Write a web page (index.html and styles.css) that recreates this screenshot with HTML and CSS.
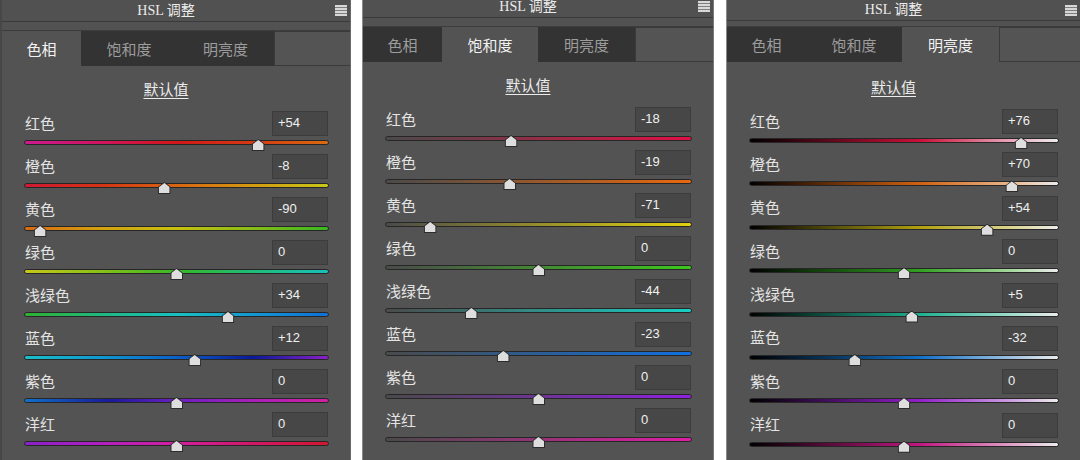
FILE: index.html
```html
<!DOCTYPE html>
<html lang="zh-CN">
<head>
<meta charset="utf-8">
<title>HSL 调整</title>
<link rel="stylesheet" href="styles.css">
</head>
<body>
<div class="page">
  <section class="panel p1">
    <header class="titlebar"><span class="title">HSL 调整</span><span class="menu-wrap"><span class="menu"></span></span></header>
    <div class="band"></div>
    <nav class="tabs">
      <div class="tab t1 active">色相</div><div class="tab t2">饱和度</div><div class="tab t3">明亮度</div><div class="tab-fill"></div>
    </nav>
    <div class="defaults"><span class="defaults-link">默认值</span></div>
    <div class="rows">
      <div class="row"><div class="row-head"><span class="label">红色</span><span class="value">+54</span></div><div class="track h-red"><span class="thumb" style="left:77%"></span></div></div>
      <div class="row"><div class="row-head"><span class="label">橙色</span><span class="value">-8</span></div><div class="track h-orange"><span class="thumb" style="left:46%"></span></div></div>
      <div class="row"><div class="row-head"><span class="label">黄色</span><span class="value">-90</span></div><div class="track h-yellow"><span class="thumb" style="left:5%"></span></div></div>
      <div class="row"><div class="row-head"><span class="label">绿色</span><span class="value">0</span></div><div class="track h-green"><span class="thumb" style="left:50%"></span></div></div>
      <div class="row"><div class="row-head"><span class="label">浅绿色</span><span class="value">+34</span></div><div class="track h-aqua"><span class="thumb" style="left:67%"></span></div></div>
      <div class="row"><div class="row-head"><span class="label">蓝色</span><span class="value">+12</span></div><div class="track h-blue"><span class="thumb" style="left:56%"></span></div></div>
      <div class="row"><div class="row-head"><span class="label">紫色</span><span class="value">0</span></div><div class="track h-purple"><span class="thumb" style="left:50%"></span></div></div>
      <div class="row"><div class="row-head"><span class="label">洋红</span><span class="value">0</span></div><div class="track h-magenta"><span class="thumb" style="left:50%"></span></div></div>
    </div>
  </section>

  <section class="panel p2">
    <header class="titlebar"><span class="title">HSL 调整</span><span class="menu-wrap"><span class="menu"></span></span></header>
    <div class="band"></div>
    <nav class="tabs">
      <div class="tab t1">色相</div><div class="tab t2 active">饱和度</div><div class="tab t3">明亮度</div><div class="tab-fill"></div>
    </nav>
    <div class="defaults"><span class="defaults-link">默认值</span></div>
    <div class="rows">
      <div class="row"><div class="row-head"><span class="label">红色</span><span class="value">-18</span></div><div class="track s-red"><span class="thumb" style="left:41%"></span></div></div>
      <div class="row"><div class="row-head"><span class="label">橙色</span><span class="value">-19</span></div><div class="track s-orange"><span class="thumb" style="left:40.5%"></span></div></div>
      <div class="row"><div class="row-head"><span class="label">黄色</span><span class="value">-71</span></div><div class="track s-yellow"><span class="thumb" style="left:14.5%"></span></div></div>
      <div class="row"><div class="row-head"><span class="label">绿色</span><span class="value">0</span></div><div class="track s-green"><span class="thumb" style="left:50%"></span></div></div>
      <div class="row"><div class="row-head"><span class="label">浅绿色</span><span class="value">-44</span></div><div class="track s-aqua"><span class="thumb" style="left:28%"></span></div></div>
      <div class="row"><div class="row-head"><span class="label">蓝色</span><span class="value">-23</span></div><div class="track s-blue"><span class="thumb" style="left:38.5%"></span></div></div>
      <div class="row"><div class="row-head"><span class="label">紫色</span><span class="value">0</span></div><div class="track s-purple"><span class="thumb" style="left:50%"></span></div></div>
      <div class="row"><div class="row-head"><span class="label">洋红</span><span class="value">0</span></div><div class="track s-magenta"><span class="thumb" style="left:50%"></span></div></div>
    </div>
  </section>

  <section class="panel p3">
    <header class="titlebar"><span class="title">HSL 调整</span><span class="menu-wrap"><span class="menu"></span></span></header>
    <div class="band"></div>
    <nav class="tabs">
      <div class="tab t1">色相</div><div class="tab t2">饱和度</div><div class="tab t3 active">明亮度</div><div class="tab-fill"></div>
    </nav>
    <div class="defaults"><span class="defaults-link">默认值</span></div>
    <div class="rows">
      <div class="row"><div class="row-head"><span class="label">红色</span><span class="value">+76</span></div><div class="track l-red"><span class="thumb" style="left:88%"></span></div></div>
      <div class="row"><div class="row-head"><span class="label">橙色</span><span class="value">+70</span></div><div class="track l-orange"><span class="thumb" style="left:85%"></span></div></div>
      <div class="row"><div class="row-head"><span class="label">黄色</span><span class="value">+54</span></div><div class="track l-yellow"><span class="thumb" style="left:77%"></span></div></div>
      <div class="row"><div class="row-head"><span class="label">绿色</span><span class="value">0</span></div><div class="track l-green"><span class="thumb" style="left:50%"></span></div></div>
      <div class="row"><div class="row-head"><span class="label">浅绿色</span><span class="value">+5</span></div><div class="track l-aqua"><span class="thumb" style="left:52.5%"></span></div></div>
      <div class="row"><div class="row-head"><span class="label">蓝色</span><span class="value">-32</span></div><div class="track l-blue"><span class="thumb" style="left:34%"></span></div></div>
      <div class="row"><div class="row-head"><span class="label">紫色</span><span class="value">0</span></div><div class="track l-purple"><span class="thumb" style="left:50%"></span></div></div>
      <div class="row"><div class="row-head"><span class="label">洋红</span><span class="value">0</span></div><div class="track l-magenta"><span class="thumb" style="left:50%"></span></div></div>
    </div>
  </section>
</div>
</body>
</html>
```

FILE: styles.css
```css
* { box-sizing: border-box; }

html, body {
  margin: 0;
  padding: 0;
  background: #ffffff;
  height: 460px;
  overflow: hidden;
}

body {
  font-family: "Noto Sans CJK SC", "Liberation Sans", sans-serif;
  color: #e4e4e4;
}

.page {
  display: flex;
  align-items: flex-start;
  width: 1080px;
  height: 460px;
}

.panel {
  flex: none;
  height: 480px;
  background: #535353;
  display: flex;
  flex-direction: column;
}

.p1 {
  width: 351px;
  margin-right: 11px;
  border-left: 2px solid #474747;
  border-right: 1px solid #6a6a6a;
}

.p2 {
  width: 352px;
  margin-right: 12px;
  margin-top: -4px;
  border-left: 1px solid #8a8a8a;
  border-right: 1px solid #7a7a7a;
}

.p3 {
  width: 354px;
  border-left: 1px solid #8a8a8a;
}

/* title bar */
.titlebar {
  display: flex;
  align-items: center;
  height: 22px;
  background: #515151;
  border-bottom: 1px solid #3a3a3a;
}

.title {
  flex: 1;
  text-align: center;
  font-family: "Liberation Serif", "Noto Sans CJK SC", serif;
  font-size: 14px;
  line-height: 20px;
  color: #ececec;
}

.menu-wrap {
  width: 20px;
  display: flex;
  justify-content: flex-end;
  padding-right: 3px;
}

.menu {
  width: 12px;
  height: 11px;
  background: repeating-linear-gradient(to bottom, #d8d8d8 0 2px, #7e7e7e 2px 3px);
}

.band {
  height: 9px;
  background: #525252;
  border-bottom: 1px solid #3c3c3c;
}

.p3 .band { height: 6px; }
.p3 .titlebar { height: 21px; }

/* tabs */
.tabs {
  display: flex;
  height: 35px;
}

.tab {
  display: flex;
  align-items: center;
  justify-content: center;
  background: #333333;
  color: #9c9c9c;
  font-size: 15px;
}

.tab.t1 { width: 79px; }
.tab.t2 { width: 96px; }
.tab.t3 { width: 97px; }

.tab.active {
  background: #535353;
  color: #f2f2f2;
}

.tab-fill {
  flex: 1;
  background: #545454;
  border-top: 1px solid #3a3a3a;
  border-left: 1px solid #3a3a3a;
  border-bottom: 1px solid #3a3a3a;
}

/* defaults link */
.defaults {
  height: 45px;
  padding-right: 20px;
  padding-top: 10px;
  text-align: center;
}

.p3 .defaults { height: 47px; padding-top: 12px; }

.defaults-link {
  font-size: 15px;
  line-height: 20px;
  color: #ececec;
  text-decoration: underline;
  text-underline-offset: 3px;
}

/* rows */
.rows {
  display: flex;
  flex-direction: column;
  padding: 0 21px 0 22px;
}

.row {
  height: 43px;
  display: flex;
  flex-direction: column;
}

.p3 .row { height: 43.4px; }

.row-head {
  height: 25px;
  display: flex;
  align-items: center;
  justify-content: space-between;
}

.label {
  padding-left: 1px;
  padding-bottom: 2px;
  font-size: 15px;
  line-height: 20px;
  color: #e4e4e4;
}

.value {
  width: 56px;
  height: 25px;
  margin-right: 1px;
  padding-left: 5px;
  background: #474747;
  border: 1px solid #3c3c3c;
  font-family: "Liberation Sans", "DejaVu Sans", sans-serif;
  font-size: 13px;
  line-height: 22px;
  color: #f0f0f0;
}

.track {
  position: relative;
  height: 5px;
  margin-top: 4px;
  border: 1px solid #262626;
  border-radius: 3px;
}

.thumb {
  position: absolute;
  top: -2px;
  width: 13px;
  height: 12px;
  transform: translateX(-50%);
}

.thumb::before,
.thumb::after {
  content: "";
  position: absolute;
  clip-path: polygon(50% 0, 100% 42%, 100% 100%, 0 100%, 0 42%);
}

.thumb::before {
  inset: 0;
  background: #2c2c2c;
}

.thumb::after {
  inset: 1px;
  background: #dedede;
}

/* hue gradients */
.h-red { background: linear-gradient(90deg, #cc1a8e 0%, #cf1460 25%, #d01818 50%, #d43a12 75%, #d86a10 100%); }
.h-orange { background: linear-gradient(90deg, #d01834 0%, #d43414 25%, #d86612 50%, #d49a10 75%, #c8c818 100%); }
.h-yellow { background: linear-gradient(90deg, #d86a10 0%, #d4a010 25%, #c8c010 50%, #88bc18 75%, #38b820 100%); }
.h-green { background: linear-gradient(90deg, #c8c818 0%, #88c018 25%, #38b828 50%, #20bc78 75%, #18c0b8 100%); }
.h-aqua { background: linear-gradient(90deg, #30b030 0%, #20b880 25%, #18c0c0 50%, #1498d0 75%, #1070d8 100%); }
.h-blue { background: linear-gradient(90deg, #18c0c8 0%, #1098d0 25%, #0c60c8 50%, #0a1a98 75%, #8a20c8 100%); }
.h-purple { background: linear-gradient(90deg, #1070c8 0%, #1a1a98 28%, #6a20c0 50%, #a820b8 75%, #d020a0 100%); }
.h-magenta { background: linear-gradient(90deg, #8820c8 0%, #b020c0 25%, #d020a0 50%, #d01868 75%, #d01830 100%); }

/* saturation gradients */
.s-red { background: linear-gradient(90deg, #4a4a4a, #e01044); }
.s-orange { background: linear-gradient(90deg, #4a4a4a, #e8680e); }
.s-yellow { background: linear-gradient(90deg, #4a4a4a, #e2d010); }
.s-green { background: linear-gradient(90deg, #4a4a4a, #3cc81c); }
.s-aqua { background: linear-gradient(90deg, #4a4a4a, #18d0c4); }
.s-blue { background: linear-gradient(90deg, #4a4a4a, #1070e0); }
.s-purple { background: linear-gradient(90deg, #4a4a4a, #9020e0); }
.s-magenta { background: linear-gradient(90deg, #4a4a4a, #e01ca4); }

/* lightness gradients */
.l-red { background: linear-gradient(90deg, #000000 0%, #c81038 55%, #e8a8bc 85%, #ececec 100%); }
.l-orange { background: linear-gradient(90deg, #000000 0%, #d06010 55%, #e8b890 85%, #ececec 100%); }
.l-yellow { background: linear-gradient(90deg, #000000 0%, #b0a010 55%, #dcd490 85%, #ececec 100%); }
.l-green { background: linear-gradient(90deg, #000000 0%, #30a020 55%, #a8d8a0 85%, #ececec 100%); }
.l-aqua { background: linear-gradient(90deg, #000000 0%, #20b090 55%, #a0dccc 85%, #ececec 100%); }
.l-blue { background: linear-gradient(90deg, #000000 0%, #1070c8 55%, #a0c0e0 85%, #ececec 100%); }
.l-purple { background: linear-gradient(90deg, #000000 0%, #9020c8 55%, #cca0e0 85%, #ececec 100%); }
.l-magenta { background: linear-gradient(90deg, #000000 0%, #c01880 55%, #e0a0c8 85%, #ececec 100%); }
```
